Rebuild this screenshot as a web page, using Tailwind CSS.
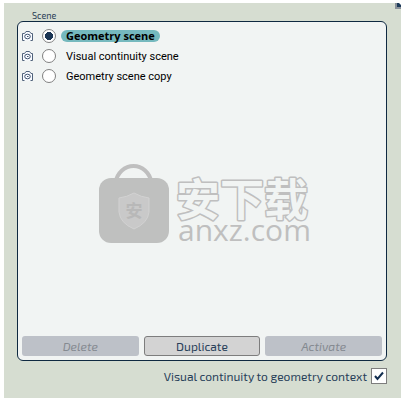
<!DOCTYPE html>
<html lang="en">

<head>
    <meta charset="UTF-8">
    <meta name="viewport" content="width=device-width, initial-scale=1.0">
    <title>Scene</title>
    <script src="https://cdn.jsdelivr.net/npm/@tailwindcss/browser@4"></script>
</head>

<body class="bg-white font-['Open_Sans','Noto_Sans_CJK_SC',sans-serif] text-black">
    <!-- camera icon, shared by the list rows -->
    <svg class="hidden">
        <symbol id="camera" viewBox="0 0 12 10">
            <path d="M2.500 9.500H.5V2.500H2.500L4 .5H7.500L9 2.500H10.500V9.500H8.500" fill="#f8faff" stroke="#50627b" />
            <ellipse cx="5.500" cy="5.500" rx="2.800" ry="2.300" fill="none" stroke="#40546f" />
            <path d="M5 5.500H6.500" stroke="#40546f" />
        </symbol>
    </svg>

    <main class="relative ml-1 mr-[13px] mt-[3px] overflow-hidden bg-[#d6ddd1] pl-[13px] pr-3.5 pt-2 pb-3.5">
        <!-- Window corner button -->
        <button class="absolute -top-2 -right-2 flex h-3.5 w-3.5 border-2 border-[#8a9199] bg-[#1d3a59] pt-1.5 pl-0.5" aria-label="Options">
            <svg class="h-1 w-1.5" viewBox="0 0 6 4"><path d="M0 0h6L3 3z" fill="#fff" /></svg>
        </button>

        <fieldset>
            <legend class="block h-2.5 pl-[15px] font-['Exo_2',Roboto,sans-serif] text-[9px] leading-[10px] text-[#2b4056]">Scene</legend>

            <div class="relative flex min-h-[340px] flex-col justify-between rounded-md border border-[#0f2941] bg-[#f1f4f3] p-1">
                <!-- Scene list -->
                <ul class="text-[11px]">
                    <li class="flex h-5 items-center">
                        <svg class="h-2.5 w-3"><use href="#camera" /></svg>
                        <label class="flex items-center">
                            <input type="radio" name="scene" checked class="ml-2 mr-[5px] h-3.5 w-3.5 appearance-none rounded-full border border-[#808080] bg-white checked:bg-[radial-gradient(circle,#1b3654_4px,#fff_4px)]">
                            <span class="rounded-md bg-[#75b9be] px-[5px] leading-3 font-bold">Geometry scene</span>
                        </label>
                    </li>
                    <li class="flex h-5 items-center">
                        <svg class="h-2.5 w-3"><use href="#camera" /></svg>
                        <label class="flex items-center">
                            <input type="radio" name="scene" class="ml-2 mr-[5px] h-3.5 w-3.5 appearance-none rounded-full border border-[#808080] bg-white checked:bg-[radial-gradient(circle,#1b3654_4px,#fff_4px)]">
                            <span class="px-[5px] pt-0.5 font-[Roboto,sans-serif]">Visual continuity scene</span>
                        </label>
                    </li>
                    <li class="flex h-5 items-center">
                        <svg class="h-2.5 w-3"><use href="#camera" /></svg>
                        <label class="flex items-center">
                            <input type="radio" name="scene" class="ml-2 mr-[5px] h-3.5 w-3.5 appearance-none rounded-full border border-[#808080] bg-white checked:bg-[radial-gradient(circle,#1b3654_4px,#fff_4px)]">
                            <span class="px-[5px] pt-0.5 font-[Roboto,sans-serif]">Geometry scene copy</span>
                        </label>
                    </li>
                </ul>

                <!-- Watermark -->
                <div class="pointer-events-none absolute inset-x-0 top-[136px] flex justify-center pl-2">
                    <svg class="h-[92px] w-[216px]" viewBox="0 0 216 92">
                        <path d="M17 26C21 2 50 2 54 26" fill="none" stroke="#bfbfbf" stroke-width="4" />
                        <rect x="1" y="20" width="70" height="65" rx="12" fill="#bfc0bf" />
                        <path d="M36 35Q43 39 51 40V54Q50 65 36 71Q22 65 21 54V40Q29 39 36 35Z" fill="#c9c9c9" stroke="#d2d2d2" stroke-width="1" />
                        <text x="36" y="59" text-anchor="middle" font-size="17" font-weight="700" fill="#b8b8b8">安</text>
                        <text x="78" y="58" font-size="44" font-weight="700" fill="#f1f4f3" stroke="#bfbfbf" stroke-width="3" stroke-linejoin="round" paint-order="stroke">安下载</text>
                        <text x="80" y="83" font-size="30" fill="#bfbfbf">anxz.com</text>
                    </svg>
                </div>

                <div class="grid grid-cols-3 gap-[5px] font-['Exo_2',Roboto,sans-serif] text-xs">
                    <button disabled class="h-5 rounded-[3px] bg-[#bdc1c8] text-[#858a91] italic">Delete</button>
                    <button class="h-5 rounded-[3px] border border-[#7d7d7d] bg-[#d3d3d3] leading-[18px] text-[#29415a]">Duplicate</button>
                    <button disabled class="h-5 rounded-[3px] bg-[#bdc1c8] text-[#858a91] italic">Activate</button>
                </div>
            </div>
        </fieldset>

        <label class="mt-[7px] flex items-center justify-end gap-1 font-['Exo_2',Roboto,sans-serif] text-xs leading-4 text-[#29415a]">
            Visual continuity to geometry context
            <span class="grid h-4 w-4 place-items-center">
                <input type="checkbox" checked class="peer col-start-1 row-start-1 h-4 w-4 appearance-none border border-[#7d7d7d] bg-white">
                <svg class="pointer-events-none invisible col-start-1 row-start-1 h-2.5 w-2.5 peer-checked:visible" viewBox="0 0 10 10"><path d="M1 5L3.500 8L9 1.500" fill="none" stroke="#132f50" stroke-width="2" /></svg>
            </span>
        </label>
    </main>
</body>

</html>
